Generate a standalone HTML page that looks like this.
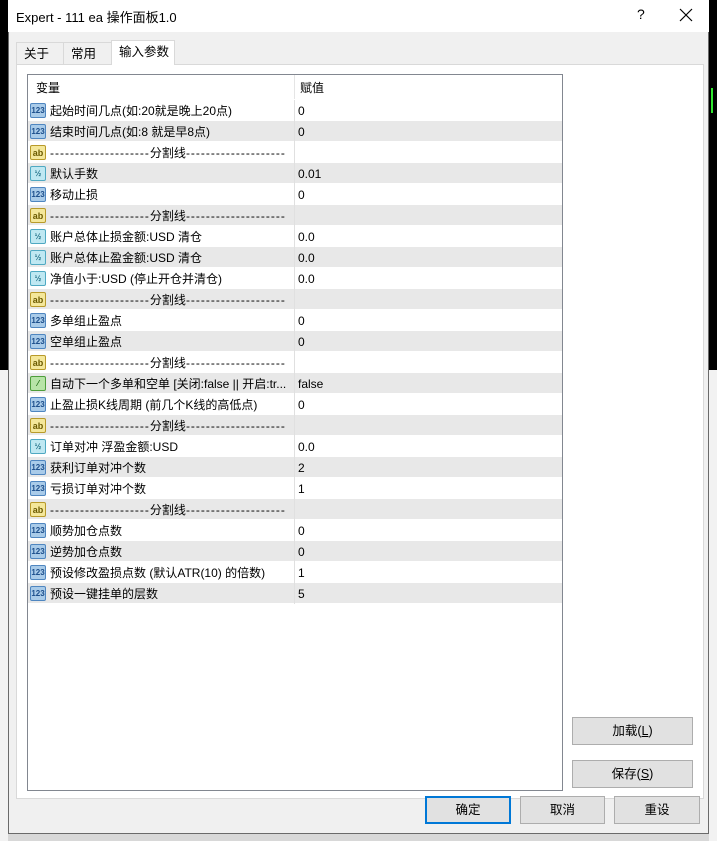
<!DOCTYPE html>
<html><head><meta charset="utf-8"><style>
*{margin:0;padding:0;box-sizing:border-box}
body{width:717px;height:841px;position:relative;overflow:hidden;background:#d8d8d8;font-family:"Liberation Sans","Noto Sans CJK SC",sans-serif;font-size:12px;color:#000}
.abs{position:absolute}
#dlg{left:8px;top:0;width:701px;height:834px;background:#f0f0f0;border:1px solid #6a6a6a;border-top:none}
#title{left:8px;top:0;width:701px;height:32px;background:#fff}
.tab{position:absolute;top:42px;height:23px;border:1px solid #d9d9d9;border-bottom:none;background:#f0f0f0;padding:0 0 0 7px;line-height:22px;font-size:12.5px}
#panel{left:16px;top:64px;width:688px;height:735px;background:#fff;border:1px solid #d9d9d9}
#lv{left:27px;top:74px;width:536px;height:717px;border:1px solid #828790;background:#fff}
.row{position:absolute;left:0;width:534px;height:21px;border-bottom:1px solid #fff;line-height:20px}
.row.g{background:#e8e8e8}
.row .n{position:absolute;left:22px;top:1px;white-space:nowrap}
.row .v{position:absolute;left:270px;top:1px}
.row .d{position:absolute;left:266px;top:0;width:1px;height:21px;background:#e0e0e0}
.dash{letter-spacing:1px}
.ic{position:absolute;left:2px;top:3px;width:16px;height:15px;border-radius:2px;font-size:8px;font-weight:bold;text-align:center;line-height:14px}
.i1{background:#a9cbe9;border:1px solid #4f86c0;color:#1d4f8c}
.i2{background:#f4e79a;border:1px solid #b89a2a;color:#6b5a00;font-size:9px}
.i3{background:#bfe8f2;border:1px solid #4fa9c2;color:#1e6e85}
.i4{background:#b7e4a7;border:1px solid #4e9e3b;color:#1c6b10}
.btn{position:absolute;background:#e1e1e1;border:1px solid #adadad;text-align:center;font-size:12.5px;line-height:26px}
</style></head><body>
<div class="abs" style="left:0;top:0;width:8px;height:370px;background:#000"></div>
<div class="abs" style="left:709px;top:0;width:8px;height:370px;background:#000"></div>
<div class="abs" style="left:711px;top:88px;width:2px;height:25px;background:#2ee62e"></div>
<div class="abs" style="left:709px;top:370px;width:8px;height:471px;background:#f2f2f2"></div>
<div class="abs" style="left:0;top:370px;width:8px;height:471px;background:#f2f2f2"></div>
<div id="dlg" class="abs"></div>
<div id="title" class="abs"><span class="abs" style="left:8px;top:7px;font-size:13px">Expert - 111 ea 操作面板1.0</span><span class="abs" style="left:629px;top:6px;font-size:14px">?</span>
<svg class="abs" style="left:671px;top:8px" width="14" height="14"><path d="M1 1L13 13M13 1L1 13" stroke="#000" stroke-width="1.2"/></svg></div>
<div class="tab" style="left:16px;width:48px">关于</div>
<div class="tab" style="left:63px;width:49px">常用</div>
<div class="tab" style="left:111px;top:40px;height:25px;width:64px;background:#fff;z-index:2">输入参数</div>
<div id="panel" class="abs"></div>
<div id="lv" class="abs">
<div class="abs" style="left:0;top:0;width:534px;height:24px;background:#fff;line-height:24px"><span class="abs" style="left:8px;top:1px">变量</span><span class="abs" style="left:272px;top:1px">赋值</span><div class="abs" style="left:266px;top:0;width:1px;height:24px;background:#e5e5e5"></div></div>
<div id="rows"></div>
</div>
<div class="btn" style="left:572px;top:717px;width:121px;height:28px">加载(<u>L</u>)</div>
<div class="btn" style="left:572px;top:760px;width:121px;height:28px">保存(<u>S</u>)</div>
<div class="btn" style="left:425px;top:796px;width:86px;height:28px;line-height:24px;border:2px solid #0078d7">确定</div>
<div class="btn" style="left:520px;top:796px;width:85px;height:28px">取消</div>
<div class="btn" style="left:614px;top:796px;width:86px;height:28px">重设</div>
<script>
var S='<span class="dash">--------------------</span>分割线<span class="dash">--------------------</span>';
var d=[[1,'起始时间几点(如:20就是晚上20点)','0'],[1,'结束时间几点(如:8 就是早8点)','0'],[2,S,''],[3,'默认手数','0.01'],[1,'移动止损','0'],[2,S,''],[3,'账户总体止损金额:USD 清仓','0.0'],[3,'账户总体止盈金额:USD 清仓','0.0'],[3,'净值小于:USD (停止开仓并清仓)','0.0'],[2,S,''],[1,'多单组止盈点','0'],[1,'空单组止盈点','0'],[2,S,''],[4,'自动下一个多单和空单 [关闭:false || 开启:tr...','false'],[1,'止盈止损K线周期 (前几个K线的高低点)','0'],[2,S,''],[3,'订单对冲 浮盈金额:USD','0.0'],[1,'获利订单对冲个数','2'],[1,'亏损订单对冲个数','1'],[2,S,''],[1,'顺势加仓点数','0'],[1,'逆势加仓点数','0'],[1,'预设修改盈损点数 (默认ATR(10) 的倍数)','1'],[1,'预设一键挂单的层数','5']];
var t={1:'123',2:'ab',3:'½',4:'⁄'};var h='';
d.forEach(function(r,i){h+='<div class="row'+(i%2?' g':'')+'" style="top:'+(25+21*i)+'px"><span class="ic i'+r[0]+'">'+t[r[0]]+'</span><span class="n">'+r[1]+'</span><div class="d"></div><span class="v">'+r[2]+'</span></div>';});
document.getElementById('rows').innerHTML=h;
</script>
</body></html>
